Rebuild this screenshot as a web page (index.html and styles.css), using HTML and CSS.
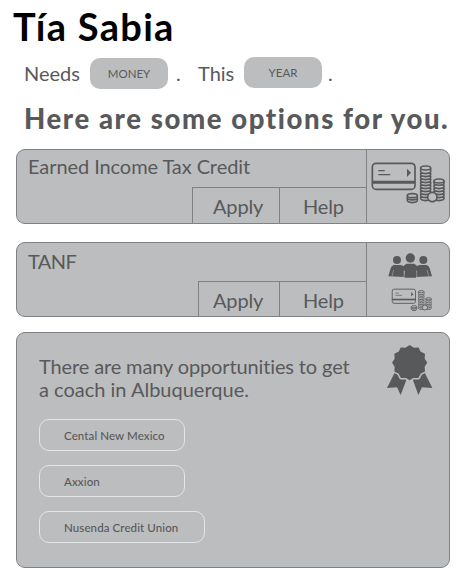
FILE: index.html
```html
<!DOCTYPE html>
<html lang="en">
<head>
<meta charset="utf-8">
<title>Tía Sabia</title>
<link rel="stylesheet" href="styles.css">
</head>
<body>
<svg width="0" height="0" class="defs">
  <defs>
    <g id="money" fill="none" stroke="#58595b">
      <rect x="37" y="55" width="128" height="78" rx="11" stroke-width="5"/>
      <path d="M37 112H165" stroke-width="9"/>
      <path d="M55 77H74M55 89H91" stroke-width="3.5"/>
      <path d="M141 71L153 83L141 96Z" fill="#58595b" stroke="none"/>
      <g stroke-width="4.8" fill="#bcbdbf">
        <path d="M182 155v5c0 9 30 9 30 0v-5M182 146v5c0 9 30 9 30 0v-5M182 137v5c0 9 30 9 30 0v-5M182 128v5c0 9 30 9 30 0v-5M182 119v5c0 9 30 9 30 0v-5M182 110v5c0 9 30 9 30 0v-5M182 101v5c0 9 30 9 30 0v-5M182 92v5c0 9 30 9 30 0v-5M182 83v5c0 9 30 9 30 0v-5M182 70v9c0 9 30 9 30 0v-9"/>
        <ellipse cx="197" cy="69" rx="15" ry="6"/>
        <path d="M222 155v5c0 9 30 9 30 0v-5M222 146v5c0 9 30 9 30 0v-5M222 137v5c0 9 30 9 30 0v-5M222 128v5c0 9 30 9 30 0v-5M222 119v5c0 9 30 9 30 0v-5M222 108v6c0 9 30 9 30 0v-6"/>
        <ellipse cx="237" cy="108" rx="15" ry="6"/>
        <path d="M142 158v8c0 9 30 9 30 0v-8"/>
        <path d="M142 152v6c0 9 30 9 30 0v-6"/>
        <ellipse cx="157" cy="152" rx="15" ry="6"/>
        <circle cx="217" cy="156" r="14" stroke-width="5"/>
      </g>
    </g>
  </defs>
</svg>
<main class="page">
  <h1 class="name">Tía Sabia</h1>
  <div class="needs">
    <span class="word word-needs">Needs</span>
    <span class="pill pill-money">MONEY</span>
    <span class="word dot-one">.</span>
    <span class="word word-this">This</span>
    <span class="pill">YEAR</span>
    <span class="word dot-two">.</span>
  </div>
  <h2 class="heading">Here are some options for you.</h2>

  <section class="card">
    <div class="info">
      <h3 class="card-title">Earned Income Tax Credit</h3>
      <div class="actions">
        <a class="action apply">Apply</a>
        <a class="action help">Help</a>
      </div>
    </div>
    <div class="side">
      <svg class="picture" viewBox="21 15 246 222"><use href="#money"/></svg>
    </div>
  </section>

  <section class="card card-tanf">
    <div class="info">
      <h3 class="card-title">TANF</h3>
      <div class="actions">
        <a class="action apply">Apply</a>
        <a class="action help">Help</a>
      </div>
    </div>
    <div class="side">
      <svg class="picture" viewBox="21 15 246 222">
        <g fill="#58595b">
          <circle cx="151" cy="60" r="14"/>
          <circle cx="111" cy="66" r="12"/>
          <circle cx="190" cy="66" r="12"/>
          <path d="M101 81H121L132 84L131 94L135 117L85 115L92 91Q94 83 101 81Z"/>
          <path d="M200 81H180L169 84L170 94L166 117L216 115L209 91Q207 83 200 81Z"/>
          <path d="M140 77H162Q171 80 172 88L178 94L168 99V119H134V99L124 94L130 88Q131 80 140 77Z"/>
        </g>
        <path d="M101 96L96 115M201 96L206 115M132 98V118M170 98V118" stroke="#bcbdbf" stroke-width="1.5"/>
        <use href="#money" transform="translate(76.5 123.5) scale(.545)"/>
      </svg>
    </div>
  </section>

  <section class="panel">
    <div class="coach">
      <p class="lead">There are many opportunities to get<br><span class="line-two">a coach in Albuquerque.</span></p>
      <div class="choices">
        <a class="choice">Cental New Mexico</a>
        <a class="choice">Axxion</a>
        <a class="choice choice-wide">Nusenda Credit Union</a>
      </div>
    </div>
    <svg class="ribbon" viewBox="50 57 141 156">
      <g fill="#58595b">
        <path d="M77 141L86 150Q94 168 113 160L94 210L83 187L53 189Z"/>
        <path d="M165 141L156 150Q148 168 129 160L147 210L158 187L189 189Z"/>
      </g>
      <path transform="translate(121 113)" fill="#58595b" stroke="#bcbdbf" stroke-width="14" stroke-linejoin="round" d="M0-50L11.4-42.5L25-43.3L31.1-31.1L43.3-25L42.5-11.4L50 0L42.5 11.4L43.3 25L31.1 31.1L25 43.3L11.4 42.5L0 50L-11.4 42.5L-25 43.3L-31.1 31.1L-43.3 25L-42.5 11.4L-50 0L-42.5-11.4L-43.3-25L-31.1-31.1L-25-43.3L-11.4-42.5Z"/>
      <path transform="translate(121 113)" fill="#58595b" stroke="#58595b" stroke-width="5" stroke-linejoin="round" d="M0-50L11.4-42.5L25-43.3L31.1-31.1L43.3-25L42.5-11.4L50 0L42.5 11.4L43.3 25L31.1 31.1L25 43.3L11.4 42.5L0 50L-11.4 42.5L-25 43.3L-31.1 31.1L-43.3 25L-42.5 11.4L-50 0L-42.5-11.4L-43.3-25L-31.1-31.1L-25-43.3L-11.4-42.5Z"/>
    </svg>
  </section>
</main>
</body>
</html>
```
FILE: styles.css
```css
* { box-sizing: border-box; }

body {
  margin: 0;
  background: #fff;
  color: #58595b;
  font-family: Lato, "Liberation Sans", sans-serif;
  font-variant-ligatures: none;
}

.defs { display: block; height: 0; }

.page { width: 471px; height: 582px; padding: 3px 21px 0 16px; }

h1, h2, h3, p { margin: 0; white-space: nowrap; }

.name {
  margin-left: -3px;
  color: #000;
  font-size: 38px;
  line-height: 46px;
  font-weight: 700;
  letter-spacing: 1.3px;
}

.needs { display: flex; margin: 8px 0 0 8px; height: 32px; }
.word { font-size: 20px; line-height: 32px; white-space: nowrap; }
.word-needs { width: 66px; }
.dot-one { width: 22px; margin-left: 8px; }
.word-this { width: 46px; }
.dot-two { margin-left: 6px; }

.pill {
  width: 78px;
  height: 31px;
  border-radius: 10px;
  background: #bcbdbf;
  font-size: 11.5px;
  line-height: 32px;
  text-align: center;
}
.pill-money { margin-top: 1px; }

.heading {
  margin: 14px 0 0 8px;
  font-size: 27.5px;
  line-height: 32px;
  font-weight: 900;
  letter-spacing: 1.6px;
}

.card {
  display: grid;
  grid-template-columns: 1fr 83px;
  height: 75px;
  margin-top: 14px;
  border: 1px solid #808184;
  border-radius: 9px;
  background: #bcbdbf;
}
.card-tanf { margin-top: 18px; }

.info { display: flex; flex-direction: column; height: 73px; }
.card-title {
  height: 37px;
  padding-left: 11px;
  font-size: 20px;
  line-height: 33px;
  font-weight: 400;
  letter-spacing: -0.08px;
}
.card-tanf .card-title { height: 38px; line-height: 36px; letter-spacing: -0.6px; }

.actions { display: flex; flex: 1; min-height: 0; align-self: flex-end; border-top: 1px solid #808184; }
.action {
  border-left: 1px solid #808184;
  font-size: 20px;
  line-height: 37px;
  letter-spacing: -0.15px;
  white-space: nowrap;
}
.apply { width: 87px; padding-left: 20px; }
.card-tanf .apply { width: 81px; padding-left: 14px; }
.help { width: 87px; padding-left: 23px; }

.side { border-left: 1px solid #808184; }
.picture { display: block; width: 82px; height: 74px; }

.panel {
  display: flex;
  justify-content: space-between;
  height: 236px;
  margin-top: 15px;
  padding: 0 16px 0 22px;
  border: 1px solid #808184;
  border-radius: 9px;
  background: #bcbdbf;
}
.lead { margin-top: 22px; font-size: 20px; line-height: 22.5px; letter-spacing: -0.13px; }
.line-two { letter-spacing: 0; }
.choices { display: flex; flex-direction: column; gap: 14px; margin-top: 19px; }
.choice {
  width: 146px;
  height: 32px;
  padding-left: 24px;
  border: 1px solid #e4e5e6;
  border-radius: 10px;
  font-size: 11.5px;
  line-height: 32px;
  font-weight: 500;
  letter-spacing: 0.1px;
  white-space: nowrap;
}
.choice-wide { width: 166px; }
.ribbon { width: 47px; height: 52px; margin-top: 11px; }
```
